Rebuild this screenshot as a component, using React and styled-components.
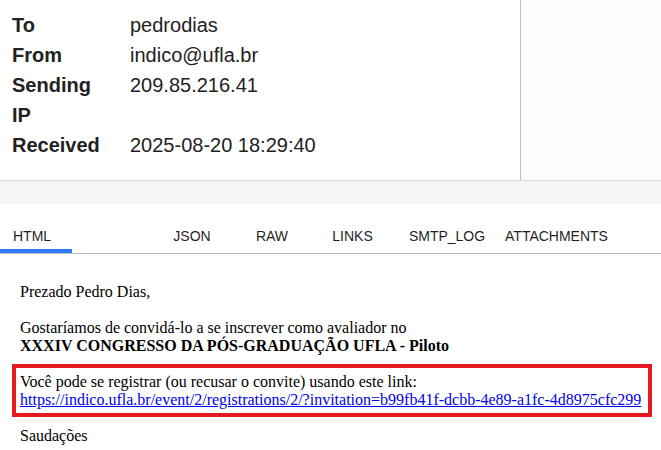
import React from "react";
import styled, { createGlobalStyle } from "styled-components";

const GlobalStyle = createGlobalStyle`
  body {
    margin: 0;
    background: #ffffff;
    font-family: "Liberation Sans", Arial, sans-serif;
  }
`;

// Header card with the message meta data
const Header = styled.div`
  display: flex;
  height: 180px;
  border-bottom: 1px solid #d9dbde;
  background: #ffffff;
`;

const MetaColumn = styled.div`
  width: 521px;
  border-right: 1px solid #b8c0c8;
  padding: 10px 0 0 12px;
  box-sizing: border-box;
`;

const SideColumn = styled.div`
  flex: 1;
  background: #fdfdfd;
`;

const MetaGrid = styled.div`
  display: grid;
  grid-template-columns: 96px 1fr;
  column-gap: 22px;
  font-size: 20px;
  line-height: 30px;
  color: #222222;
`;

const Label = styled.div`
  font-weight: bold;
`;

const Value = styled.div``;

const Gap = styled.div`
  height: 23px;
  background: #f4f5f7;
`;

// Tabs
const TabBar = styled.div`
  display: flex;
  border-bottom: 1px solid #b4bcc4;
`;

const Tab = styled.div`
  position: relative;
  width: ${(p) => p.$w}px;
  margin-left: ${(p) => p.$offset || 0}px;
  padding: 24px 0 9px ${(p) => p.$pad || 0}px;
  box-sizing: border-box;
  text-align: ${(p) => (p.$pad ? "left" : "center")};
  font-size: 14px;
  line-height: 16px;
  color: #1f1f1f;
  white-space: nowrap;

  &::after {
    content: "";
    display: ${(p) => (p.$active ? "block" : "none")};
    position: absolute;
    left: 0;
    right: 0;
    bottom: 0;
    height: 4px;
    background: #2f7cf6;
  }
`;

// Message body
const MailBody = styled.div`
  padding: 29px 0 8px 20px;
  font-family: "Liberation Serif", "Times New Roman", serif;
  font-size: 16px;
  color: #000000;
`;

const Line = styled.div`
  margin-top: ${(p) => (p.$spaced ? "18.4px" : "0")};
  font-weight: ${(p) => (p.$bold ? "bold" : "normal")};
  white-space: nowrap;
`;

const Highlight = styled.div`
  width: fit-content;
  margin: 9px 0 10px -8px;
  padding: 5px 7px 4px 4px;
  border: 4px solid #e3191f;
`;

const Link = styled.a`
  color: #0000ee;
  text-decoration: underline;
  white-space: nowrap;
`;

const meta = [
  ["To", "pedrodias"],
  ["From", "indico@ufla.br"],
  ["Sending IP", "209.85.216.41"],
  ["Received", "2025-08-20 18:29:40"],
];

const tabs = [
  { name: "HTML", w: 72, pad: 13, active: true },
  { name: "JSON", w: 80, offset: 80 },
  { name: "RAW", w: 80 },
  { name: "LINKS", w: 81 },
  { name: "SMTP_LOG", w: 108 },
  { name: "ATTACHMENTS", w: 111 },
];

const url =
  "https://indico.ufla.br/event/2/registrations/2/?invitation=b99fb41f-dcbb-4e89-a1fc-4d8975cfc299";

function App() {
  return (
    <>
      <GlobalStyle />
      <Header>
        <MetaColumn>
          <MetaGrid>
            {meta.map(([k, v]) => (
              <React.Fragment key={k}>
                <Label>{k}</Label>
                <Value>{v}</Value>
              </React.Fragment>
            ))}
          </MetaGrid>
        </MetaColumn>
        <SideColumn />
      </Header>
      <Gap />
      <TabBar>
        {tabs.map((t) => (
          <Tab key={t.name} $w={t.w} $pad={t.pad} $offset={t.offset} $active={t.active}>
            {t.name}
          </Tab>
        ))}
      </TabBar>
      <MailBody>
        <Line>Prezado Pedro Dias,</Line>
        <Line $spaced>Gostaríamos de convidá-lo a se inscrever como avaliador no</Line>
        <Line $bold>XXXIV CONGRESSO DA PÓS-GRADUAÇÃO UFLA - Piloto</Line>
        <Highlight>
          <Line>Você pode se registrar (ou recusar o convite) usando este link:</Line>
          <Line>
            <Link href={url}>{url}</Link>
          </Line>
        </Highlight>
        <Line>Saudações</Line>
      </MailBody>
    </>
  );
}

export default App;
